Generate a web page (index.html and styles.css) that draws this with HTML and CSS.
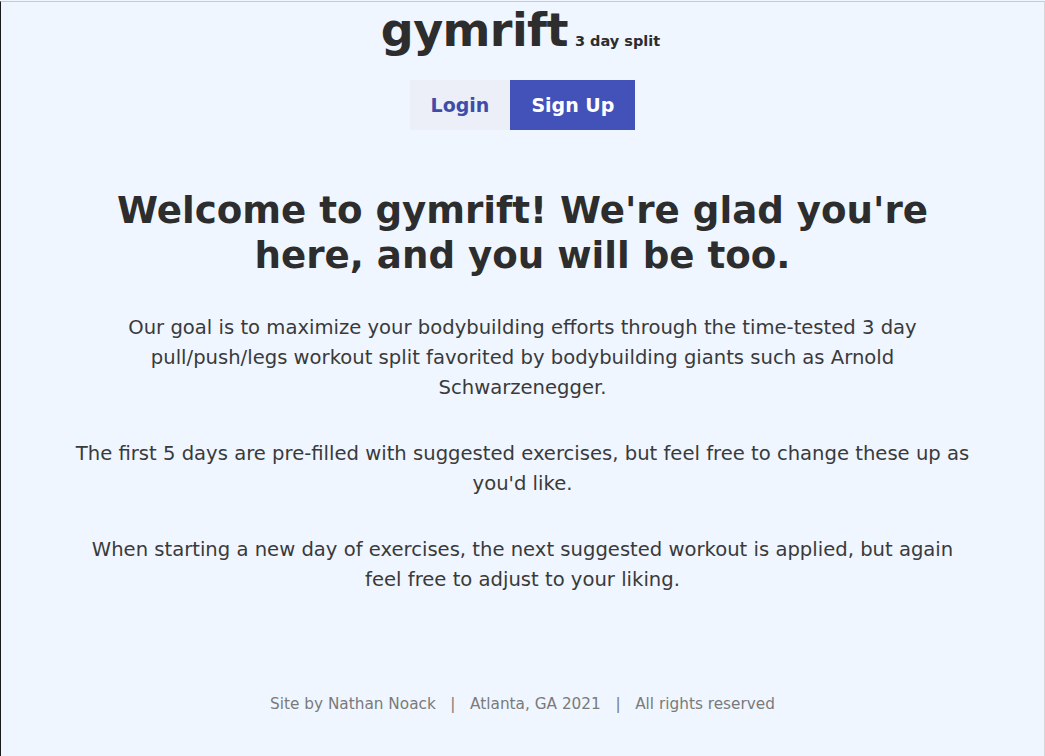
FILE: index.html
```html
<!DOCTYPE html>
<html lang="en">
<head>
<meta charset="utf-8">
<title>gymrift</title>
<link rel="stylesheet" href="styles.css">
</head>
<body>
<div class="frame">
  <header class="header">
    <div class="brand">
      <span class="logo">gymrift</span>
      <span class="tag">3 day split</span>
    </div>
    <nav class="auth">
      <a class="btn btn-login" href="#">Login</a>
      <a class="btn btn-signup" href="#">Sign Up</a>
    </nav>
  </header>
  <main class="main">
    <h1 class="title">Welcome to gymrift! We're glad you're here, and you will be too.</h1>
    <p class="para para-1">Our goal is to maximize your bodybuilding efforts through the time-tested 3 day pull/push/legs workout split favorited by bodybuilding giants such as Arnold Schwarzenegger.</p>
    <p class="para para-2">The first 5 days are pre-filled with suggested exercises, but feel free to change these up as you'd like.</p>
    <p class="para para-3">When starting a new day of exercises, the next suggested workout is applied, but again feel free to adjust to your liking.</p>
  </main>
  <footer class="footer">Site by Nathan Noack &nbsp; | &nbsp; Atlanta, GA 2021 &nbsp; | &nbsp; All rights reserved</footer>
</div>
</body>
</html>
```
FILE: styles.css
```css
* { box-sizing: border-box; }
html, body { margin: 0; padding: 0; height: 100%; }
body {
  background: #eff6ff;
  font-family: "DejaVu Sans", "Noto Sans", sans-serif;
  color: #2f2f2f;
}
.frame {
  height: 756px;
  border-top: 1px solid #c9c9c9;
  border-left: 1px solid #1a1a1a;
  border-right: 1px solid #d6d6d6;
  display: flex;
  flex-direction: column;
  align-items: center;
  margin-top: 1px;
}
.header {
  display: flex;
  flex-direction: column;
  align-items: center;
}
.brand {
  display: flex;
  align-items: baseline;
  gap: 7px;
  height: 78px;
  margin-right: 4px;
}
.logo {
  font-size: 46px;
  font-weight: 700;
  line-height: 56px;
  letter-spacing: -0.6px;
  color: #2d2d2d;
}
.tag {
  font-size: 14.5px;
  font-weight: 700;
  color: #2d2d2d;
}
.auth {
  display: flex;
}
.btn {
  display: block;
  height: 50px;
  line-height: 50px;
  font-size: 19px;
  font-weight: 700;
  text-decoration: none;
  padding: 0 21px;
}
.btn-login {
  background: #eceff8;
  color: #3e4ea8;
}
.btn-signup {
  background: #4352b9;
  color: #ffffff;
}
.main {
  width: 920px;
  text-align: center;
  display: flex;
  flex-direction: column;
  align-items: center;
}
.title {
  width: 840px;
  margin: 58px 0 0;
  font-size: 37.2px;
  line-height: 45px;
  font-weight: 700;
  color: #2d2d2d;
}
.para {
  margin: 36px 0 0;
  font-size: 19.6px;
  line-height: 30px;
  color: #3a3a3a;
}
.para-1 {
  width: 812px;
  margin-top: 35px;
}
.para-2 {
  width: 910px;
}
.para-3 {
  width: 880px;
}
.footer {
  margin-top: auto;
  margin-bottom: 44px;
  font-size: 15.3px;
  color: #7a7a7a;
}
```
